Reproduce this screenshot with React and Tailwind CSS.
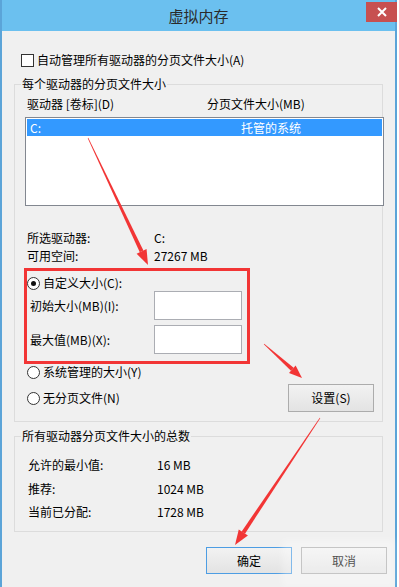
import React from "react";

const Arrow = ({ x1, y1, x2, y2, head = 15, hw = 5.5, w0 = 0.3, w1 = 2 }) => {
  const dx = x2 - x1;
  const dy = y2 - y1;
  const len = Math.hypot(dx, dy);
  const ux = dx / len;
  const uy = dy / len;
  const nx = -uy;
  const ny = ux;
  const bx = x2 - ux * head;
  const by = y2 - uy * head;
  const shaft = [
    [x1 + nx * w0, y1 + ny * w0],
    [bx + nx * w1, by + ny * w1],
    [bx - nx * w1, by - ny * w1],
    [x1 - nx * w0, y1 - ny * w0],
  ];
  const tip = [
    [x2, y2],
    [bx + nx * hw, by + ny * hw],
    [bx - nx * hw, by - ny * hw],
  ];
  const pts = (a) => a.map((p) => p.join(",")).join(" ");
  return (
    <g fill="#f23535">
      <polygon points={pts(shaft)} />
      <polygon points={pts(tip)} />
    </g>
  );
};

const Radio = ({ checked }) => (
  <span className="w-[13px] h-[13px] rounded-full border border-[#333] bg-white flex items-center justify-center shrink-0">
    {checked && <span className="w-[5px] h-[5px] rounded-full bg-[#111]" />}
  </span>
);

const Button = ({ children, focused }) => (
  <div
    className={`flex items-center justify-center border bg-gradient-to-b from-[#f2f2f2] to-[#e3e3e3] ${
      focused ? "border-[#4d9de3]" : "border-[#acacac]"
    }`}
  >
    {children}
  </div>
);

export default function App() {
  return (
    <div className="relative w-[399px] h-[587px] bg-white overflow-hidden font-['Noto_Sans_CJK_SC',sans-serif] text-[12px] leading-[16px] text-black">
      <div className="w-[397px] h-[587px] border-x-2 border-[#5ba4d8] bg-[#f0f0f0] flex flex-col">
        {/* Title bar */}
        <div className="relative h-[31px] shrink-0 bg-[#6bc0ef] flex items-center justify-center text-[15px] text-[#2a2a2a]">
          虚拟内存
          <div className="absolute right-[-2px] top-[2px] w-[31px] h-[20px] bg-[#c75050] flex items-center justify-center">
            <svg width="10" height="10" viewBox="0 0 10 10">
              <path d="M1 1L9 9M9 1L1 9" stroke="#fff" strokeWidth="2" />
            </svg>
          </div>
        </div>

        {/* Auto manage */}
        <div className="mt-[21px] pl-[19px] h-[16px] flex items-center gap-[3px]">
          <span className="w-[13px] h-[13px] border border-[#333] bg-white shrink-0" />
          <span>自动管理所有驱动器的分页文件大小(A)</span>
        </div>

        {/* Per-drive group */}
        <div className="mt-[16px] ml-[12px] w-[369px] border border-[#dcdcdc] pb-[9px] pr-[8px]">
          <div className="-mt-[9px] ml-[6px] w-fit px-[1px] bg-[#f0f0f0]">每个驱动器的分页文件大小</div>

          <div className="mt-[4px] pl-[12px] flex">
            <span className="w-[180px]">驱动器 [卷标](D)</span>
            <span>分页文件大小(MB)</span>
          </div>

          <div className="mt-[5px] ml-[10px] w-[359px] h-[89px] border border-[#828790] bg-white">
            <div className="mt-[1px] mx-[1px] h-[17px] bg-[#3399ff] text-white flex items-center pl-[3px]">
              <span className="w-[211px]">C:</span>
              <span>托管的系统</span>
            </div>
          </div>

          <div className="mt-[24px] pl-[12px] grid grid-cols-[127px_1fr] gap-y-[2px]">
            <span>所选驱动器:</span>
            <span>C:</span>
            <span>可用空间:</span>
            <span>27267 MB</span>
          </div>

          <div className="mt-[11px] pl-[12px] h-[16px] flex items-center gap-[3px]">
            <Radio checked />
            <span>自定义大小(C):</span>
          </div>

          <div className="pl-[15px] flex items-center">
            <span className="w-[124px]">初始大小(MB)(I):</span>
            <div className="w-[88px] h-[29px] border border-[#abadb3] bg-white" />
          </div>
          <div className="mt-[5px] pl-[15px] flex items-center">
            <span className="w-[124px]">最大值(MB)(X):</span>
            <div className="w-[88px] h-[29px] border border-[#abadb3] bg-white" />
          </div>

          <div className="mt-[10px] flex justify-between">
            <div className="pl-[12px] flex flex-col gap-[10px]">
              <div className="h-[16px] flex items-center gap-[3px]">
                <Radio />
                <span>系统管理的大小(Y)</span>
              </div>
              <div className="h-[16px] flex items-center gap-[3px]">
                <Radio />
                <span>无分页文件(N)</span>
              </div>
            </div>
            <div className="mt-[20px] w-[86px] h-[28px] grid">
              <Button>设置(S)</Button>
            </div>
          </div>
        </div>

        {/* Totals group */}
        <div className="mt-[14px] ml-[12px] w-[369px] border border-[#dcdcdc] pb-[11px]">
          <div className="-mt-[9px] ml-[6px] w-fit px-[1px] bg-[#f0f0f0]">所有驱动器分页文件大小的总数</div>
          <div className="mt-[13px] pl-[13px] grid grid-cols-[129px_1fr]">
            <span>允许的最小值:</span>
            <span>16 MB</span>
            <span className="mt-[8px]">推荐:</span>
            <span className="mt-[8px]">1024 MB</span>
            <span className="mt-[7px]">当前已分配:</span>
            <span className="mt-[7px]">1728 MB</span>
          </div>
        </div>

        {/* Dialog buttons */}
        <div className="mt-[15px] pr-[8px] flex justify-end gap-[9px]">
          <div className="w-[86px] h-[27px] grid">
            <Button focused>确定</Button>
          </div>
          <div className="w-[86px] h-[27px] grid">
            <Button>取消</Button>
          </div>
        </div>
      </div>

      {/* Watermark haze */}
      <div className="absolute left-[282px] top-[540px] w-[112px] h-[47px] bg-white/30 blur-[3px] pointer-events-none" />

      {/* Annotations */}
      <svg className="absolute inset-0 pointer-events-none" width="399" height="587">
        <rect x="25.5" y="269.5" width="223" height="93" fill="none" stroke="#f23535" strokeWidth="3" />
        <Arrow x1={88} y1={138} x2={148} y2={265} />
        <Arrow x1={264} y1={344} x2={302} y2={378} head={13} hw={5} />
        <Arrow x1={320} y1={418} x2={235} y2={545} />
      </svg>
    </div>
  );
}
